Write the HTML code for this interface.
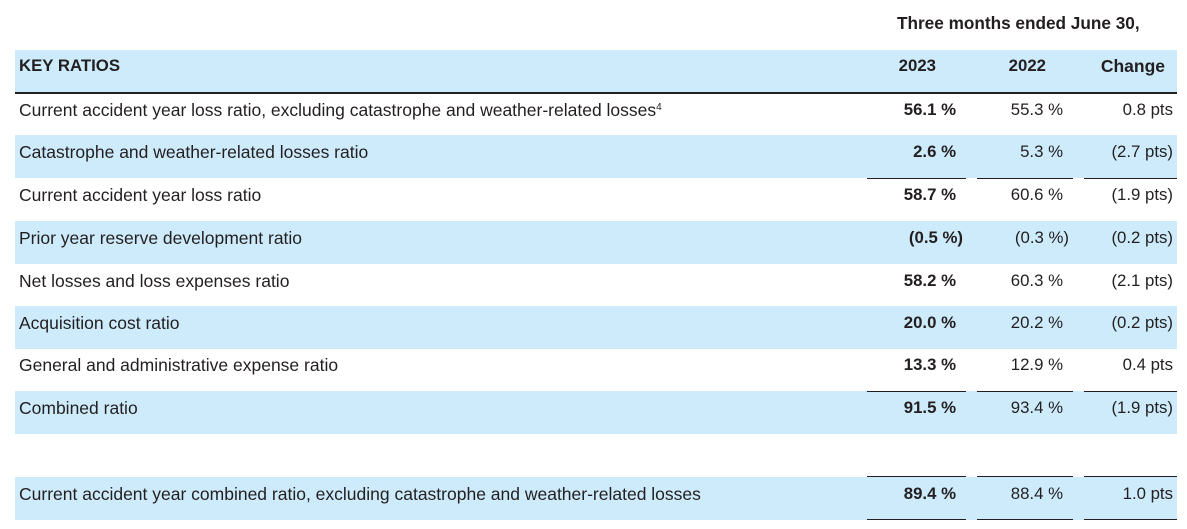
<!DOCTYPE html>
<html><head><style>
body{margin:0;width:1187px;height:529px;background:#fff;font-family:"Liberation Sans",sans-serif;color:#231f20;position:relative;overflow:hidden}
.r{position:absolute;left:15px;width:1162px;height:43px}
.b{background:#cdebfb}
.t{position:absolute;font-size:16.8px;line-height:20px}
.l{left:4px;top:7px;white-space:nowrap;font-size:17.5px}
.c1,.c2,.c3{text-align:right;top:7px}
.c1{right:221px;font-weight:bold}
.c2{right:114px}
.c3{right:4px}
.ln{position:absolute;height:1px;background:#231f20}
.h{font-weight:bold}
</style></head><body>
<div class="t h" style="left:897px;top:13px;font-size:17.2px">Three months ended June 30,</div>
<div class="r b" style="top:50px;height:42px">
<div class="t l h" style="top:6px;font-size:16.8px">KEY RATIOS</div>
<div class="t c1" style="right:241px;top:6px">2023</div>
<div class="t c2 h" style="right:131px;top:6px">2022</div>
<div class="t c3 h" style="right:12px;top:6px;font-size:17.5px">Change</div>
</div>
<div class="ln" style="left:15px;width:1162px;top:92px;height:2px"></div>

<div class="r" style="top:93px"><div class="t l">Current accident year loss ratio, excluding catastrophe and weather-related losses<sup style="font-size:10px;vertical-align:6px;line-height:0">4</sup></div><div class="t c1">56.1 %</div><div class="t c2">55.3 %</div><div class="t c3">0.8 pts</div></div>
<div class="r b" style="top:135px"><div class="t l">Catastrophe and weather-related losses ratio</div><div class="t c1">2.6 %</div><div class="t c2">5.3 %</div><div class="t c3">(2.7 pts)</div></div>
<div class="r" style="top:178px"><div class="t l">Current accident year loss ratio</div><div class="t c1">58.7 %</div><div class="t c2">60.6 %</div><div class="t c3">(1.9 pts)</div></div>
<div class="r b" style="top:221px"><div class="t l">Prior year reserve development ratio</div><div class="t c1" style="right:214px">(0.5 %)</div><div class="t c2" style="right:108px">(0.3 %)</div><div class="t c3">(0.2 pts)</div></div>
<div class="r" style="top:264px"><div class="t l">Net losses and loss expenses ratio</div><div class="t c1">58.2 %</div><div class="t c2">60.3 %</div><div class="t c3">(2.1 pts)</div></div>
<div class="r b" style="top:306px"><div class="t l">Acquisition cost ratio</div><div class="t c1">20.0 %</div><div class="t c2">20.2 %</div><div class="t c3">(0.2 pts)</div></div>
<div class="r" style="top:348px"><div class="t l">General and administrative expense ratio</div><div class="t c1">13.3 %</div><div class="t c2">12.9 %</div><div class="t c3">0.4 pts</div></div>
<div class="r b" style="top:391px"><div class="t l">Combined ratio</div><div class="t c1">91.5 %</div><div class="t c2">93.4 %</div><div class="t c3">(1.9 pts)</div></div>
<div class="r b" style="top:477px"><div class="t l">Current accident year combined ratio, excluding catastrophe and weather-related losses</div><div class="t c1">89.4 %</div><div class="t c2">88.4 %</div><div class="t c3">1.0 pts</div></div>

<div class="ln" style="left:867px;width:99px;top:178px"></div><div class="ln" style="left:977px;width:96px;top:178px"></div><div class="ln" style="left:1084px;width:93px;top:178px"></div>
<div class="ln" style="left:867px;width:99px;top:391px"></div><div class="ln" style="left:977px;width:96px;top:391px"></div><div class="ln" style="left:1084px;width:93px;top:391px"></div>
<div class="ln" style="left:867px;width:99px;top:476px"></div><div class="ln" style="left:977px;width:96px;top:476px"></div><div class="ln" style="left:1084px;width:93px;top:476px"></div>
<div class="ln" style="left:867px;width:99px;top:519px"></div><div class="ln" style="left:977px;width:96px;top:519px"></div><div class="ln" style="left:1084px;width:93px;top:519px"></div>
</body></html>
